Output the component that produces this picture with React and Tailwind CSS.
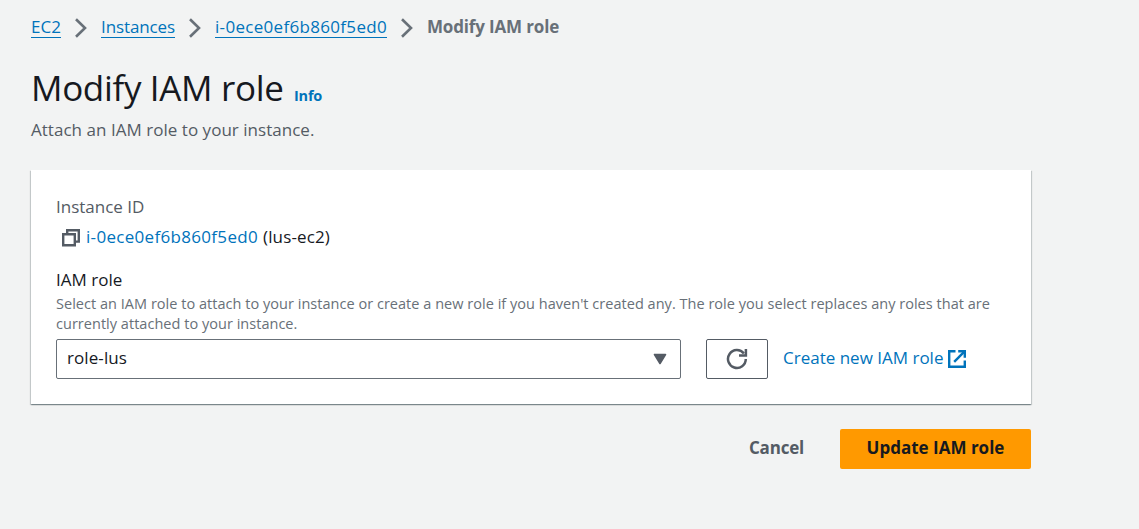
function Separator() {
  return (
    <svg className="w-[14px] h-[20px] shrink-0" viewBox="0 0 14 20" fill="none" stroke="#687078" strokeWidth="2.6">
      <path d="M2 1.2 L11 10 L2 18.8" />
    </svg>
  );
}

function CopyIcon() {
  return (
    <svg className="w-[20px] h-[20px] shrink-0" viewBox="0 0 20 20" fill="none" stroke="#545b64" strokeWidth="2.4">
      <path d="M2.2 7.2 H13.8 V18.2 H2.2 Z" />
      <path d="M6.2 7 V3.2 H17.8 V14.6 H14" />
    </svg>
  );
}

function RefreshIcon() {
  return (
    <svg className="w-[22px] h-[22px]" viewBox="0 0 22 22" fill="none" stroke="#545b64" strokeWidth="2.5">
      <path d="M19.8 11 A8.9 8.9 0 1 1 17.9 5.5" />
      <path d="M19.9 1 V7.5 H13" />
    </svg>
  );
}

function ExternalIcon() {
  return (
    <svg className="w-[20px] h-[20px] shrink-0" viewBox="0 0 20 20" fill="none" stroke="#0073bb" strokeWidth="2.4">
      <path d="M8.5 2.2 H2.2 V17.8 H17.8 V11.5" />
      <path d="M11.2 2.2 H17.8 V8.8" />
      <path d="M17.3 2.7 L7.2 12.8" />
    </svg>
  );
}

function Crumb({ children, className }) {
  return (
    <a href="#" className={`h-[23px] border-b border-[#0073bb] text-[#0073bb] whitespace-nowrap ${className}`}>
      {children}
    </a>
  );
}

export default function App() {
  return (
    <div className="w-[1139px] h-[529px] overflow-hidden bg-[#f2f3f3] pl-[31px] pt-[15px] font-['Open_Sans',sans-serif] text-[17px] leading-[24px] text-[#16191f]">
      <nav className="flex items-start h-[24px]">
        <Crumb className="w-[30px]">EC2</Crumb>
        <span className="w-[40px] pl-[13px] pt-[3px]"><Separator /></span>
        <Crumb className="w-[74px] tracking-[-0.11px]">Instances</Crumb>
        <span className="w-[40px] pl-[13px] pt-[3px]"><Separator /></span>
        <Crumb className="w-[172px] tracking-[0.31px]">i-0ece0ef6b860f5ed0</Crumb>
        <span className="w-[40px] pl-[13px] pt-[3px]"><Separator /></span>
        <span className="font-bold text-[#687078] whitespace-nowrap tracking-[-0.16px]">Modify IAM role</span>
      </nav>

      <header className="mt-[27px]">
        <div className="flex items-baseline h-[44px]">
          <h1 className="w-[263px] text-[35px] leading-[44px] whitespace-nowrap tracking-[-0.33px]">Modify IAM role</h1>
          <a href="#" className="text-[14.5px] font-bold text-[#0073bb] tracking-[-0.2px]">Info</a>
        </div>
        <p className="mt-[8px] text-[#545b64] tracking-[0.03px]">Attach an IAM role to your instance.</p>
      </header>

      <main className="mt-[28px] w-[1000px] h-[234px] bg-white px-[25px] pt-[25px] shadow-[0_1px_1px_0_rgba(0,28,36,0.3),1px_1px_1px_0_rgba(0,28,36,0.15),-1px_1px_1px_0_rgba(0,28,36,0.15)]">
        <div className="text-[#545b64]">Instance ID</div>
        <div className="mt-[6px] flex items-start pl-[5px]">
          <span className="w-[25px] pt-[2px]"><CopyIcon /></span>
          <a href="#" className="w-[177px] text-[#0073bb] tracking-[0.31px]">i-0ece0ef6b860f5ed0</a>
          <span className="tracking-[0.14px]">(lus-ec2)</span>
        </div>
        <div className="mt-[19px]">IAM role</div>
        <div className="mt-[2px] text-[14.5px] leading-[20px] text-[#687078] tracking-[0.028px] whitespace-nowrap">
          Select an IAM role to attach to your instance or create a new role if you haven't created any. The role you select replaces any roles that are
          <br />
          currently attached to your instance.
        </div>
        <div className="mt-[5px] flex">
          <button className="flex w-[625px] h-[40px] items-center justify-between rounded-[2px] border border-[#687078] pl-[10px] pr-[13px]">
            <span className="pb-[3px] tracking-[0.09px]">role-lus</span>
            <svg className="w-[14px] h-[12px]" viewBox="0 0 14 12" fill="#545b64"><path d="M1.5 1.5 H12.5 L7 10.5 Z" stroke="#545b64" strokeWidth="1.6" strokeLinejoin="round" /></svg>
          </button>
          <button aria-label="Refresh" className="ml-[25px] flex w-[62px] h-[40px] items-center justify-center rounded-[2px] border border-[#545b64]">
            <RefreshIcon />
          </button>
          <a href="#" className="ml-[15px] flex h-[40px] items-start pt-[7px] text-[#0073bb]">
            <span className="w-[164px] whitespace-nowrap">Create new IAM role</span>
            <span className="pt-[3px]"><ExternalIcon /></span>
          </a>
        </div>
      </main>

      <footer className="mt-[25px] flex w-[1000px] justify-end font-bold">
        <button className="h-[40px] w-[127px] pb-[2px] text-[#545b64] tracking-[-0.2px]">Cancel</button>
        <button className="h-[40px] w-[191px] rounded-[2px] bg-[#ff9900] pb-[2px]">Update IAM role</button>
      </footer>
    </div>
  );
}
